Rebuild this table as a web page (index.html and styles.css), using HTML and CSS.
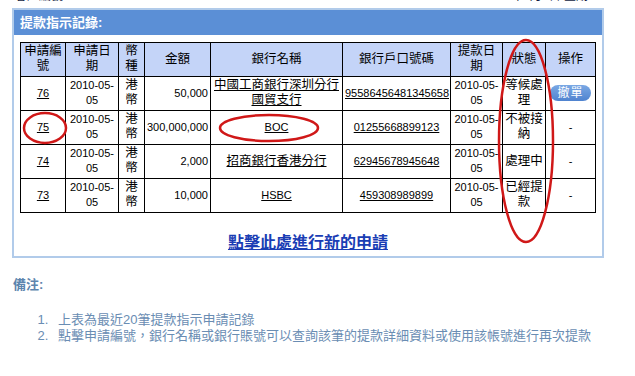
FILE: index.html
```html
<!DOCTYPE html>
<html lang="zh-Hant">
<head>
<meta charset="utf-8">
<title>提款指示記錄</title>
<link rel="stylesheet" href="styles.css">
</head>
<body>
<div class="topline">
  <span class="cust">客戶編號:800321</span>
  <span class="date">2010年5月5日 星期三</span>
</div>
<div class="panel">
  <div class="panel-head">提款指示記錄:</div>
  <table class="records">
    <colgroup>
      <col class="c1"><col class="c2"><col class="c3"><col class="c4"><col class="c5"><col class="c6"><col class="c7"><col class="c8"><col class="c9">
    </colgroup>
    <thead>
      <tr><th>申請編號</th><th>申請日期</th><th>幣種</th><th>金額</th><th>銀行名稱</th><th>銀行戶口號碼</th><th>提款日期</th><th>狀態</th><th>操作</th></tr>
    </thead>
    <tbody>
      <tr>
        <td><a class="n" href="#">76</a></td>
        <td class="n">2010-05-05</td>
        <td>港幣</td>
        <td class="n amt">50,000</td>
        <td><a href="#">中國工商銀行深圳分行國貿支行</a></td>
        <td><a class="n" href="#">95586456481345658</a></td>
        <td class="n">2010-05-05</td>
        <td>等候處理</td>
        <td><span class="btn">撤單</span></td>
      </tr>
      <tr>
        <td><a class="n" href="#">75</a></td>
        <td class="n">2010-05-05</td>
        <td>港幣</td>
        <td class="n amt">300,000,000</td>
        <td><a class="n" href="#">BOC</a></td>
        <td><a class="n" href="#">01255668899123</a></td>
        <td class="n">2010-05-05</td>
        <td>不被接納</td>
        <td class="n">-</td>
      </tr>
      <tr>
        <td><a class="n" href="#">74</a></td>
        <td class="n">2010-05-05</td>
        <td>港幣</td>
        <td class="n amt">2,000</td>
        <td><a href="#">招商銀行香港分行</a></td>
        <td><a class="n" href="#">62945678945648</a></td>
        <td class="n">2010-05-05</td>
        <td>處理中</td>
        <td class="n">-</td>
      </tr>
      <tr>
        <td><a class="n" href="#">73</a></td>
        <td class="n">2010-05-05</td>
        <td>港幣</td>
        <td class="n amt">10,000</td>
        <td><a class="n" href="#">HSBC</a></td>
        <td><a class="n" href="#">459308989899</a></td>
        <td class="n">2010-05-05</td>
        <td>已經提款</td>
        <td class="n">-</td>
      </tr>
    </tbody>
  </table>
  <div class="newlink"><a href="#">點擊此處進行新的申請</a></div>
</div>
<div class="notes">
  <div class="notes-title">備注:</div>
  <ol class="notes-list">
    <li>上表為最近20筆提款指示申請記錄</li>
    <li>點擊申請編號，銀行名稱或銀行賬號可以查詢該筆的提款詳細資料或使用該帳號進行再次提款</li>
  </ol>
</div>
<svg class="marks" width="635" height="376" viewBox="0 0 635 376">
  <ellipse cx="45" cy="128" rx="21" ry="15" fill="none" stroke="#d01818" stroke-width="2.5"/>
  <ellipse cx="269" cy="128" rx="49" ry="13" fill="none" stroke="#d01818" stroke-width="2.5"/>
  <ellipse cx="526" cy="141" rx="27" ry="101" fill="none" stroke="#d01818" stroke-width="2.5"/>
</svg>
</body>
</html>
```

FILE: styles.css
```css
html, body {
  margin: 0;
  padding: 0;
  background: #fff;
}
body {
  position: relative;
  width: 635px;
  height: 376px;
  overflow: hidden;
  font-family: "Liberation Sans", "Noto Sans CJK TC", sans-serif;
  font-size: 12px;
  color: #000;
}
.topline {
  height: 8px;
  overflow: hidden;
  display: flex;
  justify-content: space-between;
  padding: 0 35px 0 15px;
}
.topline span {
  display: block;
  margin-top: -11px;
  line-height: 14px;
  font-size: 12px;
  color: #111a40;
}
.panel {
  margin-left: 12px;
  width: 588px;
  border: 2px solid #b1cbea;
  height: 246px;
  box-sizing: content-box;
}
.panel-head {
  height: 25px;
  line-height: 25px;
  background: #5b8fd6;
  color: #fff;
  font-weight: bold;
  font-size: 13px;
  padding-left: 6px;
}
.records {
  margin: 7px 0 0 6px;
  width: 575px;
  table-layout: fixed;
  border-collapse: collapse;
  border: 1px solid #000;
  font-size: 12.5px;
}
.c1 { width: 45px; }
.c2 { width: 53px; }
.c3 { width: 26px; }
.c4 { width: 66px; }
.c5 { width: 132px; }
.c6 { width: 108px; }
.c7 { width: 52px; }
.c8 { width: 43px; }
.c9 { width: 50px; }
.records th, .records td {
  border: 1px solid #000;
  padding: 1px 2px 2px;
  line-height: 15px;
  height: 30px;
  text-align: center;
  vertical-align: middle;
  font-weight: normal;
  word-break: break-all;
}
.records th {
  background: #c4d4f8;
}
.records td.amt {
  text-align: right;
  white-space: nowrap;
}
.records a {
  color: #000;
  text-decoration: underline;
}
.n {
  font-size: 11px;
  word-break: normal;
}
.records td.n {
  word-break: break-all;
}
.btn {
  display: inline-block;
  white-space: nowrap;
  padding: 0 7px;
  height: 16px;
  line-height: 16px;
  border-radius: 8px;
  background: linear-gradient(#7aa8e4, #4f83cf);
  color: #fff;
  font-size: 12px;
  letter-spacing: 1px;
}
.newlink {
  margin-top: 16px;
  text-align: center;
  font-size: 16px;
  font-weight: bold;
}
.newlink a {
  color: #1a3db4;
  text-decoration: underline;
}
.notes {
  padding: 18px 0 0 13px;
  color: #5d85ae;
}
.notes-title {
  font-weight: bold;
  font-size: 13px;
  line-height: 18px;
}
.notes-list {
  margin: 18px 0 0 0;
  padding-left: 39px;
  font-size: 13px;
  line-height: 16px;
  color: #6a8db3;
}
.notes-list li {
  padding-left: 6px;
}
.marks {
  position: absolute;
  left: 0;
  top: 0;
  pointer-events: none;
}
```
